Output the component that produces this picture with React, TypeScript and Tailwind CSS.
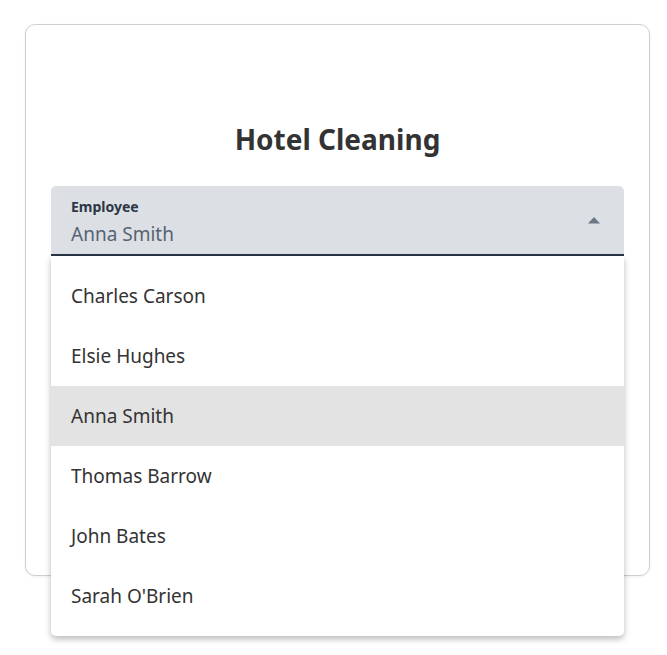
import React, { useState } from 'react';

const employees = ['Charles Carson', 'Elsie Hughes', 'Anna Smith', 'Thomas Barrow', 'John Bates', "Sarah O'Brien"];

const App: React.FC = () => {
  const [selected, setSelected] = useState('Anna Smith');

  return (
    <div className="min-h-[655px] bg-white pt-[24px] px-[25px]" style={{ fontFamily: '"Noto Sans", "Open Sans", sans-serif' }}>
      <div className="w-[625px] h-[552px] border border-[#cfcfcf] rounded-[10px] bg-white shadow-[0_1px_3px_rgba(0,0,0,0.06)] px-[25px] pt-[94px]">
        <h1 className="text-center text-[28px] font-bold text-[#333] leading-[40px]">Hotel Cleaning</h1>

        {/* Select */}
        <div className="relative mt-[27px]">
          <div className="h-[70px] bg-[#dcdfe3] rounded-t-[5px] border-b-2 border-[#283544] px-[20px] pt-[11px] flex items-start justify-between">
            <div className="flex flex-col">
              <span className="text-[14px] font-bold text-[#2b3747] leading-[20px]">Employee</span>
              <span className="text-[19px] text-[#566372] leading-[28px] mt-[3px]">{selected}</span>
            </div>
            <svg width="14" height="8" viewBox="0 0 14 8" className="mt-[19px] mr-[3px]">
              <path d="M1 7.5 L7 1 L13 7.5 Z" fill="#6b7785" />
            </svg>
          </div>

          {/* Dropdown menu */}
          <ul className="absolute left-0 right-0 top-[70px] z-10 bg-white rounded-b-[5px] py-[10px] shadow-[0_3px_6px_rgba(0,0,0,0.28)]">
            {employees.map((name) => (
              <li
                key={name}
                onClick={() => setSelected(name)}
                className={`h-[60px] flex items-center px-[20px] text-[19px] text-[#333] cursor-pointer ${
                  name === selected ? 'bg-[#e3e3e3]' : ''
                }`}
              >
                {name}
              </li>
            ))}
          </ul>
        </div>
      </div>
    </div>
  );
};

export default App;
